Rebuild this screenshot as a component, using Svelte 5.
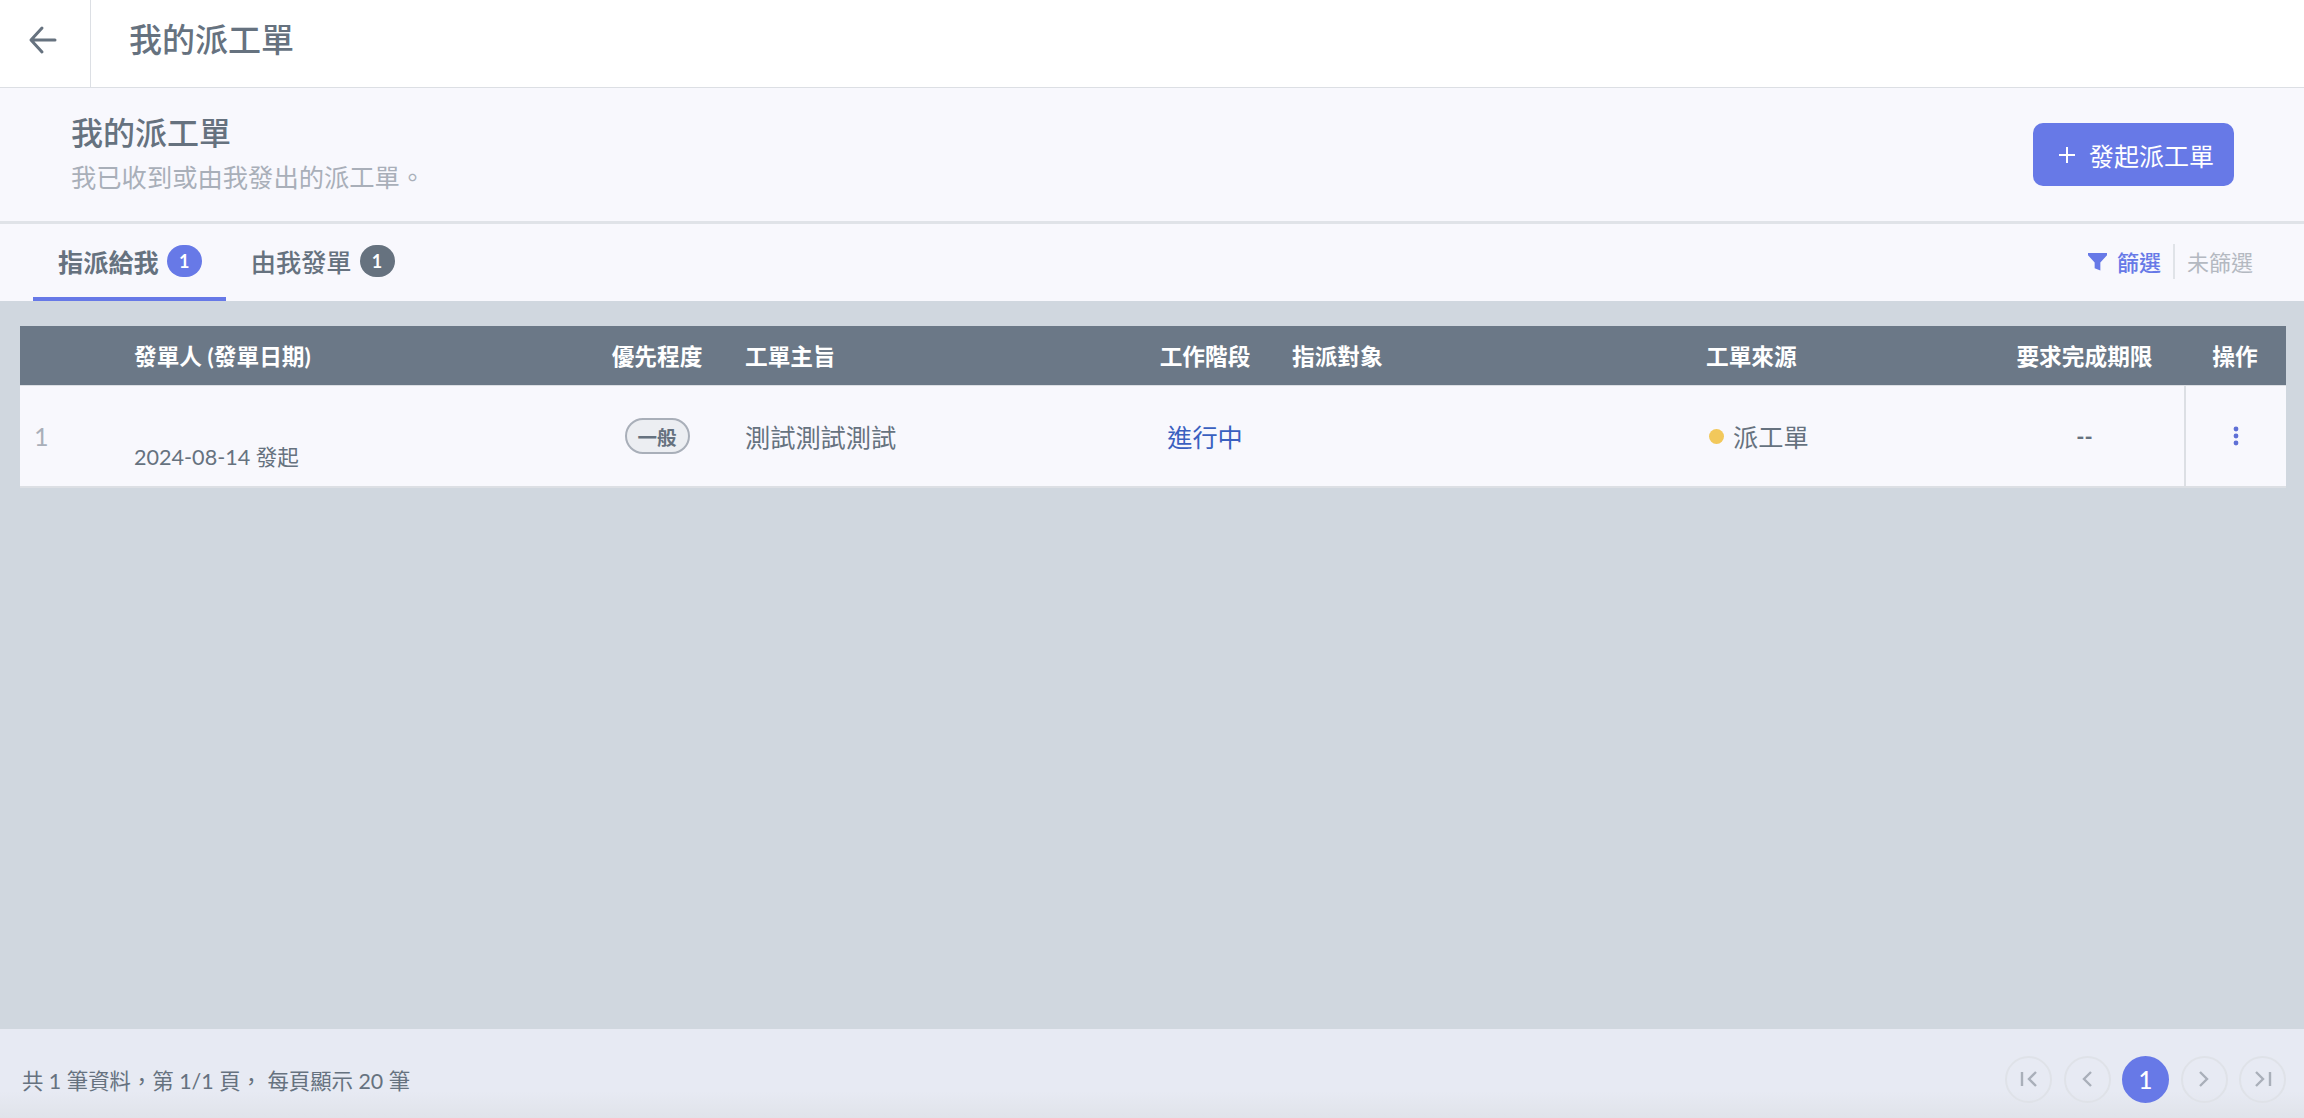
<script>
  const columns = [
    { label: '', cls: '' },
    { label: '發單人 (發單日期)', cls: '' },
    { label: '優先程度', cls: 'center' },
    { label: '工單主旨', cls: 'pad' },
    { label: '工作階段', cls: 'center' },
    { label: '指派對象', cls: 'pad' },
    { label: '工單來源', cls: 'pad' },
    { label: '要求完成期限', cls: 'center' },
    { label: '操作', cls: 'center' }
  ];
</script>

<div class="page">
  <header class="topbar">
    <button class="back" aria-label="返回">
      <svg width="30" height="30" viewBox="0 0 30 30" fill="none" stroke="#66727f" stroke-width="3" stroke-linecap="round" stroke-linejoin="round"><path d="M27 15H3.500M14 3L3 15l11 12" /></svg>
    </button>
    <div class="toptitle">我的派工單</div>
  </header>

  <section class="intro">
    <div>
      <h1>我的派工單</h1>
      <p>我已收到或由我發出的派工單。</p>
    </div>
    <button class="primary">
      <svg width="16" height="16" viewBox="0 0 16 16" stroke="#fff" stroke-width="2"><path d="M0 8h16M8 0v16" /></svg>
      發起派工單
    </button>
  </section>

  <nav class="tabs">
    <div class="tab active">指派給我<span class="badge blue">1</span></div>
    <div class="tab">由我發單<span class="badge grey">1</span></div>
    <div class="filters">
      <span class="filter">
        <svg width="19" height="19" viewBox="0 0 20 20" fill="#6779e7"><path d="M0 1h20v2.500l-7 7.500v8.500l-6-2.500v-6L0 3.500z" /></svg>
        篩選
      </span>
      <span class="unfilter">未篩選</span>
    </div>
  </nav>

  <main class="content">
    <div class="table">
      <div class="row head">
        {#each columns as c}
          <div class="cell {c.cls}">{c.label}</div>
        {/each}
      </div>
      <div class="row body">
        <div class="cell num">1</div>
        <div class="cell requester"><span>2024-08-14 發起</span></div>
        <div class="cell center"><span class="chip">一般</span></div>
        <div class="cell pad">測試測試測試</div>
        <div class="cell center stage">進行中</div>
        <div class="cell pad"></div>
        <div class="cell pad source"><i class="dot"></i>派工單</div>
        <div class="cell center dash">--</div>
        <div class="cell center ops">
          <svg width="6" height="20" viewBox="0 0 6 20" fill="#5f70d6"><circle cx="3" cy="3" r="2.400" /><circle cx="3" cy="10" r="2.400" /><circle cx="3" cy="17" r="2.400" /></svg>
        </div>
      </div>
    </div>
  </main>

  <footer class="footer">
    <div class="summary">共 1 筆資料，第 1/1 頁， 每頁顯示 20 筆</div>
    <div class="pager">
      <span class="pg"><svg width="20" height="20" viewBox="0 0 20 20" fill="none" stroke="#a9afb9" stroke-width="2.400"><path d="M3 3v14M17 3l-7 7 7 7" /></svg></span>
      <span class="pg"><svg width="20" height="20" viewBox="0 0 20 20" fill="none" stroke="#a9afb9" stroke-width="2.400"><path d="M14 3l-7 7 7 7" /></svg></span>
      <span class="pg current">1</span>
      <span class="pg"><svg width="20" height="20" viewBox="0 0 20 20" fill="none" stroke="#a9afb9" stroke-width="2.400"><path d="M6 3l7 7-7 7" /></svg></span>
      <span class="pg"><svg width="20" height="20" viewBox="0 0 20 20" fill="none" stroke="#a9afb9" stroke-width="2.400"><path d="M3 3l7 7-7 7M17 3v14" /></svg></span>
    </div>
  </footer>
</div>

<style>
  :global(body) {
    margin: 0;
    overflow: hidden;
  }
  .page {
    height: 100vh;
    display: flex;
    flex-direction: column;
    background: #d0d7df;
    color: #66727f;
    font-family: Lato, "Noto Sans CJK TC", sans-serif;
  }
  .topbar {
    height: 88px;
    flex: none;
    box-sizing: border-box;
    display: flex;
    align-items: stretch;
    background: #fff;
    border-bottom: 1px solid #dcdfe4;
  }
  .back {
    width: 91px;
    padding: 0 4px 8px 0;
    background: none;
    border: 0;
    border-right: 1px solid #dcdfe4;
    display: flex;
    align-items: center;
    justify-content: center;
    box-sizing: border-box;
  }
  .toptitle {
    margin-left: 38px;
    font-size: 33px;
    font-weight: 500;
    line-height: 78px;
  }
  .intro {
    height: 136px;
    flex: none;
    box-sizing: border-box;
    background: #f8f8fd;
    border-bottom: 3px solid #e0e3e8;
    padding: 0 70px 0 71px;
    display: flex;
    align-items: center;
    justify-content: space-between;
  }
  .intro > div {
    padding-bottom: 3px;
  }
  h1 {
    margin: 0;
    font-size: 32px;
    line-height: 44px;
    font-weight: 500;
  }
  .intro p {
    margin: 3px 0 0;
    font-size: 25.300px;
    line-height: 38px;
    color: #a9afb9;
  }
  .primary {
    width: 201px;
    height: 63px;
    box-sizing: border-box;
    padding: 0 0 0 26px;
    background: #6779e7;
    border: 0;
    border-radius: 10px;
    color: #fff;
    font-family: inherit;
    font-size: 25px;
    display: flex;
    align-items: center;
    gap: 14px;
  }
  .tabs {
    height: 77px;
    flex: none;
    box-sizing: border-box;
    background: #f8f8fd;
    display: flex;
    padding: 0 33px;
  }
  .tab {
    padding: 0 24px 0 25px;
    font-size: 25.200px;
    font-weight: 500;
    display: flex;
    align-items: center;
    gap: 8px;
    border-bottom: 4px solid transparent;
  }
  .tab.active {
    font-weight: 700;
    border-bottom-color: #6779e7;
  }
  .badge {
    width: 35px;
    height: 32px;
    border-radius: 16px;
    color: #fff;
    font-size: 18px;
    font-weight: 700;
    display: flex;
    align-items: center;
    justify-content: center;
  }
  .blue { background: #6779e7; }
  .grey { background: #66727f; }
  .filters {
    margin-left: auto;
    display: flex;
    align-items: center;
    font-size: 22px;
    padding: 0 18px 3px 0;
  }
  .filter {
    display: flex;
    align-items: center;
    gap: 10px;
    color: #6779e7;
    font-weight: 500;
    padding-right: 12px;
    border-right: 2px solid #e0e3e8;
    height: 35px;
  }
  .unfilter {
    color: #b4b9c1;
    padding-left: 12px;
  }
  .content {
    flex: 1;
    padding: 25px 18px 0 20px;
    min-height: 0;
  }
  .row {
    display: grid;
    grid-template-columns: 114px 455px 136px 413px 134px 414px 299px 199px 102px;
  }
  .head {
    height: 59px;
    box-sizing: border-box;
    padding-bottom: 1px;
    background: #6b7887;
    color: #fff;
    font-size: 22.700px;
    font-weight: 700;
  }
  .body {
    height: 103px;
    background: #f8f8fd;
    border-top: 1px solid #dcdfe4;
    border-bottom: 2px solid #dcdfe4;
    box-sizing: border-box;
    font-size: 25.200px;
  }
  .cell {
    display: flex;
    align-items: center;
    min-width: 0;
  }
  .center {
    justify-content: center;
  }
  .pad {
    padding-left: 20px;
  }
  .num {
    padding-left: 14px;
    color: #a9afb9;
  }
  .requester {
    align-items: flex-end;
    font-size: 21.600px;
    padding-bottom: 15px;
    box-sizing: border-box;
  }
  .chip {
    width: 65px;
    height: 36px;
    box-sizing: border-box;
    border: 2px solid #a9afb9;
    border-radius: 18px;
    background: #eceef2;
    font-size: 19.500px;
    font-weight: 700;
    display: flex;
    align-items: center;
    justify-content: center;
  }
  .stage {
    color: #3a60c0;
    font-weight: 400;
  }
  .source {
    padding-left: 23px;
    gap: 9px;
  }
  .dot {
    width: 15px;
    height: 15px;
    border-radius: 50%;
    background: #f2c85b;
  }
  .dash {
    font-size: 22px;
    font-weight: 700;
  }
  .ops {
    border-left: 2px solid #dcdfe4;
    box-sizing: border-box;
  }
  .footer {
    height: 89px;
    flex: none;
    box-sizing: border-box;
    background: linear-gradient(#e7eaf3 70%, #e0e3ea);
    padding: 11px 18px 0 22px;
    display: flex;
    align-items: center;
    justify-content: space-between;
  }
  .summary {
    font-size: 21.400px;
  }
  .pager {
    display: flex;
    gap: 11.500px;
  }
  .pg {
    width: 47px;
    height: 47px;
    box-sizing: border-box;
    border: 2px solid #dfe2e8;
    border-radius: 50%;
    display: flex;
    align-items: center;
    justify-content: center;
  }
  .current {
    background: #6779e7;
    border-color: #6779e7;
    color: #fff;
    font-size: 24px;
    font-weight: 500;
  }
</style>
